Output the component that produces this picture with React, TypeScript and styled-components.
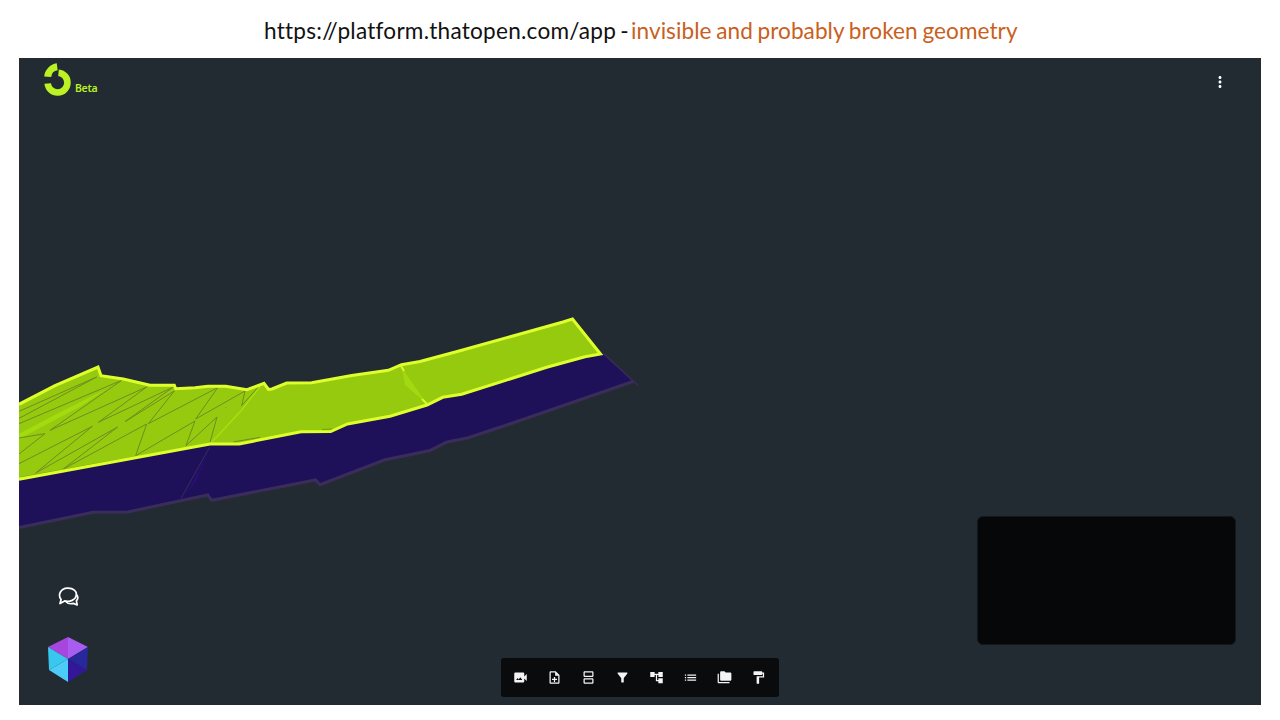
import React from 'react';
import styled, { createGlobalStyle } from 'styled-components';
import {
  MdVideoCameraBack,
  MdOutlineNoteAdd,
  MdOutlineSplitscreen,
  MdFilterAlt,
  MdAccountTree,
  MdList,
  MdFolderCopy,
  MdFormatPaint,
  MdMoreVert,
} from 'react-icons/md';

const GlobalStyle = createGlobalStyle`
  * { box-sizing: border-box; }
  body { margin: 0; background: #fff; overflow: hidden; }
`;

const Page = styled.div`
  width: 1280px;
  height: 720px;
  padding: 0 19px 15px;
  display: flex;
  flex-direction: column;
`;

const Caption = styled.h1`
  margin: 0;
  height: 58px;
  padding: 3px 0 0 245px;
  display: flex;
  align-items: center;
  font: 400 22.6px/26px Lato, 'Liberation Sans', sans-serif;
  font-variant-ligatures: none;
  white-space: nowrap;
`;

const CaptionPart = styled.span<{ $color: string; $width: number; $spacing: number; $word: number }>`
  width: ${(p) => p.$width}px;
  color: ${(p) => p.$color};
  letter-spacing: ${(p) => p.$spacing}px;
  word-spacing: ${(p) => p.$word}px;
`;

const Viewer = styled.main`
  position: relative;
  flex: 1;
  display: flex;
  flex-direction: column;
  justify-content: space-between;
  background: #232b32;
`;

const Scene = styled.svg`
  position: absolute;
  inset: 0;
  width: 100%;
  height: 100%;
`;

const TopBar = styled.header`
  position: relative;
  display: flex;
  justify-content: space-between;
  padding: 5px 32px 0 25px;
`;

const Brand = styled.div`
  display: flex;
  align-items: flex-start;
  gap: 3px;
`;

const Beta = styled.span`
  margin-top: 18px;
  color: #bcf124;
  font: 600 10.5px/15px 'Noto Sans', sans-serif;
  letter-spacing: -0.3px;
`;

const MenuButton = styled.button`
  margin-top: 10px;
  width: 18px;
  height: 18px;
  padding: 0;
  border: 0;
  background: none;
  color: #fff;
  display: flex;
`;

const BottomArea = styled.div`
  position: relative;
  height: 190px;
  display: grid;
  grid-template-columns: 482px 278px 1fr;
`;

const LeftTools = styled.div`
  display: flex;
  flex-direction: column;
  align-items: flex-start;
  padding: 71px 0 0 28px;
  gap: 28px;
`;

const ChatIcon = styled.svg`
  margin-left: 11px;
  display: block;
`;

const Toolbar = styled.nav`
  align-self: end;
  height: 39px;
  margin-bottom: 8px;
  padding: 0 4px 0 2px;
  display: flex;
  background: #090b0d;
  border-radius: 3px;
`;

const Tool = styled.button`
  flex: 1;
  padding: 0 0 1px;
  border: 0;
  background: none;
  color: #f4f4f4;
  font-size: 15px;
  display: flex;
  align-items: center;
  justify-content: center;
`;

const MiniMap = styled.aside`
  justify-self: end;
  width: 259px;
  height: 129px;
  margin: 1px 25px 0 0;
  background: #050708;
  border: 1px solid #11171a;
  border-radius: 6px;
`;

const tools = [
  { name: 'Camera', Icon: MdVideoCameraBack },
  { name: 'Add file', Icon: MdOutlineNoteAdd },
  { name: 'Sections', Icon: MdOutlineSplitscreen },
  { name: 'Filter', Icon: MdFilterAlt },
  { name: 'Tree', Icon: MdAccountTree },
  { name: 'Properties', Icon: MdList },
  { name: 'Models', Icon: MdFolderCopy },
  { name: 'Style', Icon: MdFormatPaint },
];

const lowerEdge =
  '600.5,354 585,356.7 546.7,367.3 461.7,394.3 442.7,397.3 427,405 390,416.3 347.5,424 330.7,431.5 301,431.7 239.3,444 210,444 19,479.3';
const upperEdge =
  '19,404.3 55,385.7 98,367 101,375.7 123.3,379 150,385.3 174.3,385.3 175.7,388.7 195,387.7 208,386.3 225.7,386.3 247,389.7 264,383.3 268.5,389.5 272,389 286.7,383 311.7,382.7 351.7,375.6 388.3,370.3 401.5,364.7 420,361.5 460,350.7 563,322 572.5,319';
const wallBottom =
  '19,527.5 93.3,512.2 126.7,512.2 207.7,495 211.7,500.3 315.5,480 320,484.7 384.3,460 430,450.5 446.3,442.3 468.3,437.7 506.7,425 633,381.5';

function Geometry() {
  return (
    <Scene viewBox="19 58 1242 647">
      <polygon points={`${wallBottom} 604,355 ${lowerEdge}`} fill="#1f1159" />
      <path d="M604 354L638 385.5" stroke="#382b59" strokeWidth="1.5" />
      <polyline points={wallBottom} fill="none" stroke="#3b2d5b" strokeWidth="3" />
      <polygon points={`${upperEdge} ${lowerEdge}`} fill="#96ca0e" />
      <g transform="translate(15 355) scale(.33333)" fill="none">
        <path d="M12 236L150 164L270 104L200 152L12 252Z" fill="#a3dc0e" />
        <path d="M735 95L680 165L590 262" stroke="#a7e20e" strokeWidth="4" />
        <path
          d="M12 169L245 66M12 190L245 66M12 206L320 76L105 226L395 96M12 326L232 214L62 354M12 249L90 236L12 297M62 354L308 216L145 342L395 207L362 302M250 202L395 96M250 202L475 96L330 200L478 108L400 206L608 98L542 192L690 108L680 152L728 98M362 302L540 198L513 272L606 186L585 262M632 158L634 159M655 261L735 247"
          stroke="#6f8c22"
          strokeWidth="3"
        />
        <path d="M583 278L498 430" stroke="#382c5e" strokeWidth="3" />
        <path d="M582 284L545 375L510 424L550 352Z" fill="#2c0e76" />
        <path d="M20 366L365 304" stroke="#779a20" strokeWidth="2" />
      </g>
      <path d="M402 368L405 385L427 404Z" fill="#a2d911" />
      <path d="M401 366L404 371M422 399L427 404" stroke="#d9fa28" strokeWidth="2" />
      <path d="M322 429.5L333 429" stroke="#75991a" strokeWidth="1" />
      <polyline
        points={`${upperEdge} ${lowerEdge}`}
        fill="none"
        stroke="#deff2c"
        strokeWidth="3"
      />
    </Scene>
  );
}

export default function App() {
  return (
    <Page>
      <GlobalStyle />
      <Caption>
        <CaptionPart $color="#111" $width={367} $spacing={0.24} $word={-2}>https://platform.thatopen.com/app -</CaptionPart>
        <CaptionPart $color="#c9601d" $width={400} $spacing={0.06} $word={-1.2}>invisible and probably broken geometry</CaptionPart>
      </Caption>
      <Viewer>
        <Geometry />
        <TopBar>
          <Brand>
            <svg width="28" height="34" viewBox="0 0 28 34" fill="none" stroke="#bcf124" strokeWidth="6.6">
              <path d="M14.5 9.7A9.9 9.9 0 1 1 3.7 20.5" />
              <path d="M3.7 13.7A11 11 0 0 1 13.2 3.8" strokeWidth="7" />
            </svg>
            <Beta>Beta</Beta>
          </Brand>
          <MenuButton aria-label="Menu"><MdMoreVert size={18} /></MenuButton>
        </TopBar>
        <BottomArea>
          <LeftTools>
            <ChatIcon width="21" height="22" viewBox="0 0 21 22" fill="none" stroke="#fff" strokeWidth="1.7" strokeLinejoin="round">
              <path d="M2 17.5L3.1 13.5C-.8 8.2 3.2 2.5 9.3 2.2C15.4 1.9 19 5.2 18.3 9.4C17.6 14 11.8 16.3 6.6 14.9Z" />
              <path d="M18 8.2C20.2 10.2 20 13 18.4 14.9L19.2 19L15.4 17.4C12 18.3 9.2 17.2 7.4 15.2" />
            </ChatIcon>
            <svg width="42" height="47" viewBox="0 0 42 47">
              <path d="M21 1L41 11L21 23Z" fill="#a85df0" />
              <path d="M21 1L1 11L21 23Z" fill="#a746df" />
              <path d="M1 11L21 23L2 34Z" fill="#39c7ed" />
              <path d="M21 23V46L2 34Z" fill="#4bcdf8" />
              <path d="M41 11L21 23L40 34Z" fill="#27299a" />
              <path d="M21 23V46L40 34Z" fill="#321799" />
            </svg>
          </LeftTools>
          <Toolbar>
            {tools.map(({ name, Icon }) => (
              <Tool key={name} aria-label={name}><Icon /></Tool>
            ))}
          </Toolbar>
          <MiniMap />
        </BottomArea>
      </Viewer>
    </Page>
  );
}
